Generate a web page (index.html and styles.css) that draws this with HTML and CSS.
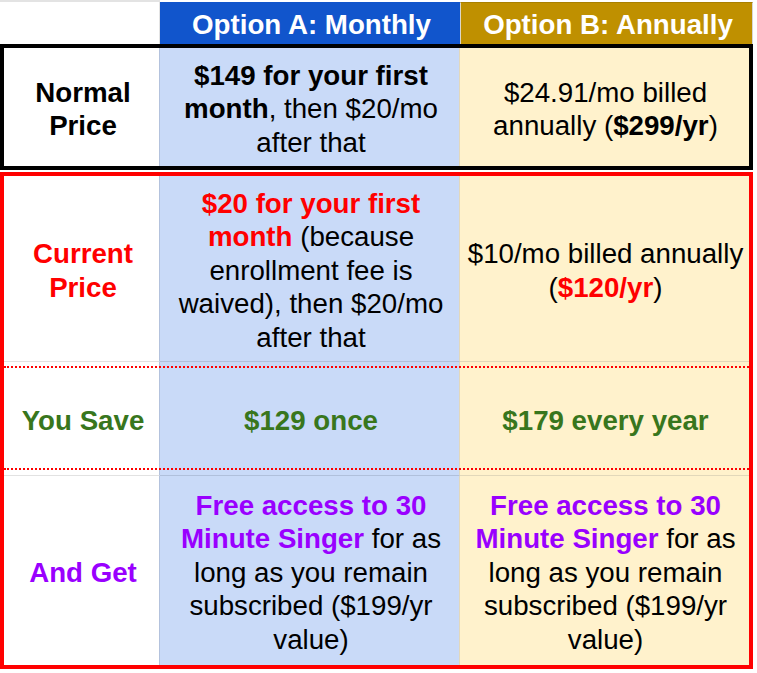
FILE: index.html
```html
<!DOCTYPE html>
<html>
<head>
<meta charset="utf-8">
<link rel="stylesheet" href="styles.css">
</head>
<body>
<div class="sheet">
  <div class="head">
    <div class="hcell h1"></div>
    <div class="hcell h2"><span class="txt">Option A: Monthly</span></div>
    <div class="hcell h3"><span class="txt">Option B: Annually</span></div>
  </div>

  <div class="box box-black">
    <div class="row r-normal">
      <div class="cell c1"><span class="txt"><b>Normal Price</b></span></div>
      <div class="cell c2"><span class="txt"><b>$149 for your first month</b>, then $20/mo after that</span></div>
      <div class="cell c3"><span class="txt">$24.91/mo billed annually (<b>$299/yr</b>)</span></div>
    </div>
  </div>

  <div class="box box-red">
    <div class="row r-current">
      <div class="cell c1 lined"><span class="txt red"><b>Current Price</b></span></div>
      <div class="cell c2 lined"><span class="txt"><b class="red">$20 for your first month</b> (because enrollment fee is waived), then $20/mo after that</span></div>
      <div class="cell c3 lined"><span class="txt">$10/mo billed annually (<b class="red">$120/yr</b>)</span></div>
    </div>
    <div class="row r-save">
      <div class="cell c1 lined"><span class="txt green"><b>You Save</b></span></div>
      <div class="cell c2 lined"><span class="txt green"><b>$129 once</b></span></div>
      <div class="cell c3 lined"><span class="txt green"><b>$179 every year</b></span></div>
    </div>
    <div class="row r-get">
      <div class="cell c1"><span class="txt purple"><b>And Get</b></span></div>
      <div class="cell c2"><span class="txt"><b class="purple">Free access to 30 Minute Singer</b> for as long as you remain subscribed ($199/yr value)</span></div>
      <div class="cell c3"><span class="txt"><b class="purple">Free access to 30 Minute Singer</b> for as long as you remain subscribed ($199/yr value)</span></div>
    </div>
  </div>
</div>
</body>
</html>
```

FILE: styles.css
```css
* {
  box-sizing: border-box;
}

body {
  margin: 0;
  background: #ffffff;
  font-family: "Liberation Sans", Arial, sans-serif;
  font-size: 27.7px;
  line-height: 33.5px;
  color: #000000;
}

.sheet {
  width: 753px;
}

b {
  font-weight: bold;
}

.txt {
  display: block;
  text-align: center;
}

.red { color: #ff0000; }
.green { color: #38761d; }
.purple { color: #9900ff; }

/* header row */
.head {
  display: grid;
  grid-template-columns: 160px 300px 293px;
  height: 44px;
}

.hcell {
  display: flex;
  align-items: center;
  justify-content: center;
  padding: 3px 0 0 3px;
  color: #ffffff;
  font-weight: bold;
}

.h1 {
  border-top: 2px solid #e3e3e3;
  border-right: 1px solid #e3e3e3;
}

.h2 {
  margin-top: 2px;
  background: #1155cc;
}

.h3 {
  margin-top: 2px;
  background: #bf9000;
  border-top: 1px solid #a98000;
  border-left: 1px solid #dcd6c8;
  border-right: 1px solid #d6d6d6;
}

/* boxes */
.box {
  border: 4px solid;
}

.box-black {
  border-color: #000000;
}

.box-red {
  margin-top: 2px;
  border-color: #ff0000;
}

.row {
  display: grid;
  grid-template-columns: 156px 300px 289px;
}

.cell {
  display: flex;
  align-items: center;
  justify-content: center;
  padding: 4px 4px 0 7px;
}

.c1 {
  background: #ffffff;
  border-right: 1px solid #b3c2dd;
}

.c2 {
  background: #c9daf8;
  border-right: 1px solid #e2d8bd;
}

.c3 {
  background: #fff2cc;
  padding: 4px 2px 0 4px;
}

.c1.lined { border-bottom: 1px solid #e2e2e2; }
.c2.lined { border-bottom: 1px solid #b0c0dc; }
.c3.lined { border-bottom: 1px solid #e2d8ba; }

.r-normal {
  height: 118px;
}

.r-current {
  height: 186px;
}

.r-save {
  height: 114px;
  position: relative;
}

.r-save::before,
.r-save::after {
  content: "";
  position: absolute;
  left: 0;
  right: 0;
  border-top: 2px dotted #ff0000;
}

.r-save::before {
  top: 4px;
}

.r-save::after {
  bottom: 6px;
}

.r-get {
  height: 189px;
}
```
